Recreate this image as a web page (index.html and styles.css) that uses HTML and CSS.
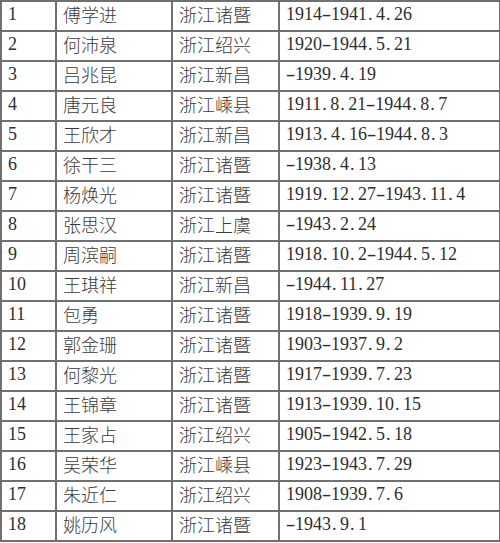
FILE: index.html
```html
<!DOCTYPE html>
<html lang="zh-CN">
<head>
<meta charset="utf-8">
<title>名单</title>
<link rel="stylesheet" href="styles.css">
</head>
<body>
<table class="roster">
  <colgroup>
    <col class="c-num">
    <col class="c-name">
    <col class="c-place">
    <col class="c-date">
  </colgroup>
  <tbody>
    <tr><td class="num">1</td><td class="name">傅学进</td><td class="place">浙江诸暨</td><td class="date">1914<span class="d">-</span>1941<span class="p">.</span>4<span class="p">.</span>26</td></tr>
    <tr><td class="num">2</td><td class="name">何沛泉</td><td class="place">浙江绍兴</td><td class="date">1920<span class="d">-</span>1944<span class="p">.</span>5<span class="p">.</span>21</td></tr>
    <tr><td class="num">3</td><td class="name">吕兆昆</td><td class="place">浙江新昌</td><td class="date"><span class="d">-</span>1939<span class="p">.</span>4<span class="p">.</span>19</td></tr>
    <tr><td class="num">4</td><td class="name">唐元良</td><td class="place">浙江嵊县</td><td class="date">1911<span class="p">.</span>8<span class="p">.</span>21<span class="d">-</span>1944<span class="p">.</span>8<span class="p">.</span>7</td></tr>
    <tr><td class="num">5</td><td class="name">王欣才</td><td class="place">浙江新昌</td><td class="date">1913<span class="p">.</span>4<span class="p">.</span>16<span class="d">-</span>1944<span class="p">.</span>8<span class="p">.</span>3</td></tr>
    <tr><td class="num">6</td><td class="name">徐干三</td><td class="place">浙江诸暨</td><td class="date"><span class="d">-</span>1938<span class="p">.</span>4<span class="p">.</span>13</td></tr>
    <tr><td class="num">7</td><td class="name">杨焕光</td><td class="place">浙江诸暨</td><td class="date">1919<span class="p">.</span>12<span class="p">.</span>27<span class="d">-</span>1943<span class="p">.</span>11<span class="p">.</span>4</td></tr>
    <tr><td class="num">8</td><td class="name">张思汉</td><td class="place">浙江上虞</td><td class="date"><span class="d">-</span>1943<span class="p">.</span>2<span class="p">.</span>24</td></tr>
    <tr><td class="num">9</td><td class="name">周滨嗣</td><td class="place">浙江诸暨</td><td class="date">1918<span class="p">.</span>10<span class="p">.</span>2<span class="d">-</span>1944<span class="p">.</span>5<span class="p">.</span>12</td></tr>
    <tr><td class="num">10</td><td class="name">王琪祥</td><td class="place">浙江新昌</td><td class="date"><span class="d">-</span>1944<span class="p">.</span>11<span class="p">.</span>27</td></tr>
    <tr><td class="num">11</td><td class="name">包勇</td><td class="place">浙江诸暨</td><td class="date">1918<span class="d">-</span>1939<span class="p">.</span>9<span class="p">.</span>19</td></tr>
    <tr><td class="num">12</td><td class="name">郭金珊</td><td class="place">浙江诸暨</td><td class="date">1903<span class="d">-</span>1937<span class="p">.</span>9<span class="p">.</span>2</td></tr>
    <tr><td class="num">13</td><td class="name">何黎光</td><td class="place">浙江诸暨</td><td class="date">1917<span class="d">-</span>1939<span class="p">.</span>7<span class="p">.</span>23</td></tr>
    <tr><td class="num">14</td><td class="name">王锦章</td><td class="place">浙江诸暨</td><td class="date">1913<span class="d">-</span>1939<span class="p">.</span>10<span class="p">.</span>15</td></tr>
    <tr><td class="num">15</td><td class="name">王家占</td><td class="place">浙江绍兴</td><td class="date">1905<span class="d">-</span>1942<span class="p">.</span>5<span class="p">.</span>18</td></tr>
    <tr><td class="num">16</td><td class="name">吴荣华</td><td class="place">浙江嵊县</td><td class="date">1923<span class="d">-</span>1943<span class="p">.</span>7<span class="p">.</span>29</td></tr>
    <tr><td class="num">17</td><td class="name">朱近仁</td><td class="place">浙江绍兴</td><td class="date">1908<span class="d">-</span>1939<span class="p">.</span>7<span class="p">.</span>6</td></tr>
    <tr><td class="num">18</td><td class="name">姚历风</td><td class="place">浙江诸暨</td><td class="date"><span class="d">-</span>1943<span class="p">.</span>9<span class="p">.</span>1</td></tr>
  </tbody>
</table>
</body>
</html>
```

FILE: styles.css
```css
html, body {
  margin: 0;
  padding: 0;
  background: #ffffff;
}

.roster {
  border-collapse: collapse;
  table-layout: fixed;
  width: 499px;
  color: #2e2e2e;
  font-size: 18px;
}

.c-num { width: 55px; }
.c-name { width: 116px; }
.c-place { width: 107px; }
.c-date { width: 221px; }

.roster tr {
  height: 30px;
}

.roster td {
  border: 2px solid #707070;
  padding: 0 0 0 6px;
  vertical-align: top;
  line-height: 24px;
  white-space: nowrap;
  overflow: hidden;
}

.num,
.date {
  font-family: "Liberation Serif", "Times New Roman", serif;
}

.num {
  padding-left: 5px;
}

.name,
.place {
  font-family: "Noto Sans CJK SC", "Noto Sans", sans-serif;
  font-weight: 300;
  color: #3a3a3a;
}

.name {
  padding-left: 7px;
}

.place {
  padding-left: 4px;
}

.date .p,
.date .d {
  display: inline-block;
  width: 9px;
}

.date .p {
  text-align: left;
  text-indent: 1px;
}

.date .d {
  text-align: center;
  transform: scaleX(1.6);
}
```
